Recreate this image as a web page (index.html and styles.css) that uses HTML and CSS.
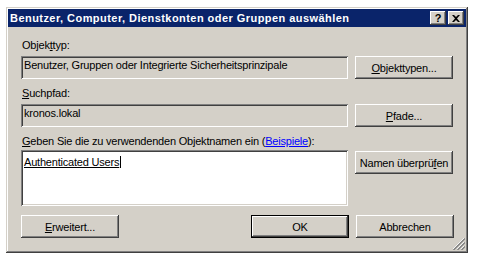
FILE: index.html
```html
<!DOCTYPE html>
<html lang="de">
<head>
  <meta charset="UTF-8" />
  <title>Benutzer, Computer, Dienstkonten oder Gruppen auswählen</title>
  <link rel="stylesheet" href="styles.css">
</head>
<body>
  <div class="window">
    <div class="titlebar">
      <span class="title">Benutzer, Computer, Dienstkonten oder Gruppen auswählen</span>
      <div class="caption-buttons">
        <span class="cap-btn help">?</span>
        <span class="cap-btn">
          <svg width="8" height="7" viewBox="0 0 8 7"><path d="M0 0h2l2 2 2-2h2L5 3.5 8 7H6L4 5 2 7H0l3-3.5z" fill="#000"/></svg>
        </span>
      </div>
    </div>

    <div class="dialog">
      <div class="label first">Objek<u>t</u>typ:</div>
      <div class="row">
        <div class="field">Benutzer, Gruppen oder Integrierte Sicherheitsprinzipale</div>
        <button class="btn"><u>O</u>bjekttypen...</button>
      </div>

      <div class="label"><u>S</u>uchpfad:</div>
      <div class="row">
        <div class="field">kronos.lokal</div>
        <button class="btn"><u>P</u>fade...</button>
      </div>

      <div class="label third"><u>G</u>eben Sie die zu verwendenden Objektnamen ein (<a class="link" href="#">Beispiele</a>):</div>
      <div class="row names">
        <div class="field edit"><span class="resolved">Authenticated Users</span><span class="caret"></span></div>
        <button class="btn check">Namen überprü<u>f</u>en</button>
      </div>

      <div class="footer">
        <button class="btn"><u>E</u>rweitert...</button>
        <div class="footer-right">
          <button class="btn default">OK</button>
          <button class="btn">Abbrechen</button>
        </div>
      </div>
    </div>

    <svg class="grip" width="12" height="12" viewBox="0 0 12 12">
      <path d="M11 0L0 11M11 4L4 11M11 8L8 11" stroke="#fff" stroke-width="1"/>
      <path d="M12 0.5L0.5 12M12 4.5L4.5 12M12 8.5L8.5 12" stroke="#808080" stroke-width="1.4"/>
    </svg>
  </div>
</body>
</html>
```

FILE: styles.css
```css
body {
  margin: 0;
  padding: 7px 0 0 6px;
  background: #fff;
  font-family: "Liberation Sans", Arial, sans-serif;
  font-size: 11px;
  letter-spacing: -0.2px;
  color: #000;
}

.window {
  position: relative;
  box-sizing: border-box;
  width: 462px;
  height: 246px;
  padding: 2px;
  background: #d4d0c8;
  box-shadow: inset -1px -1px #404040, inset 1px 1px #d4d0c8,
              inset -2px -2px #808080, inset 2px 2px #fff;
}

.titlebar {
  display: flex;
  justify-content: space-between;
  align-items: flex-start;
  height: 18px;
  background: #0a246a;
  color: #fff;
}

.title {
  padding: 2px 0 0 2px;
  font-weight: bold;
  letter-spacing: 0.45px;
  line-height: 14px;
}

.caption-buttons {
  display: flex;
  gap: 2px;
  margin: 2px 2px 0 0;
}

.cap-btn {
  display: flex;
  align-items: center;
  justify-content: center;
  width: 16px;
  height: 14px;
  background: #d4d0c8;
  color: #000;
  box-shadow: inset -1px -1px #404040, inset 1px 1px #fff,
              inset -2px -2px #808080, inset 2px 2px #d4d0c8;
}

.cap-btn.help {
  font-weight: bold;
  font-size: 11px;
  line-height: 14px;
}

.dialog {
  padding: 12px 12px 0 13px;
}

.label {
  line-height: 13px;
  margin: 0 0 4px 1px;
}

.label + .row {
  margin-bottom: 8px;
}

.label.third {
  margin-top: 4px;
  margin-bottom: 2px;
}

.row {
  display: grid;
  grid-template-columns: 327px 98px;
  column-gap: 7px;
  align-items: start;
}

.field {
  box-sizing: border-box;
  height: 23px;
  padding: 3px 3px 0;
  line-height: 13px;
  white-space: nowrap;
  overflow: hidden;
  box-shadow: inset 1px 1px #808080, inset -1px -1px #fff,
              inset 2px 2px #404040, inset -2px -2px #d4d0c8;
}

.field.edit {
  height: 56px;
  padding-top: 6px;
  background: #fff;
}

.resolved {
  text-decoration: underline;
}

.caret {
  display: inline-block;
  width: 1px;
  height: 12px;
  margin-left: 1px;
  vertical-align: -2px;
  background: #000;
}

.btn {
  box-sizing: border-box;
  width: 98px;
  height: 23px;
  padding: 0;
  border: none;
  background: #d4d0c8;
  font-family: inherit;
  font-size: 11px;
  letter-spacing: inherit;
  color: #000;
  box-shadow: inset -1px -1px #404040, inset 1px 1px #fff,
              inset -2px -2px #808080, inset 2px 2px #d4d0c8;
}

.btn.check {
  margin-top: 1px;
}

.btn.default {
  border: 1px solid #000;
}

.link {
  color: #0000ff;
}

.footer {
  display: flex;
  justify-content: space-between;
  margin-top: 9px;
}

.footer-right {
  display: flex;
  gap: 7px;
}

.grip {
  position: absolute;
  right: 3px;
  bottom: 3px;
}
```
